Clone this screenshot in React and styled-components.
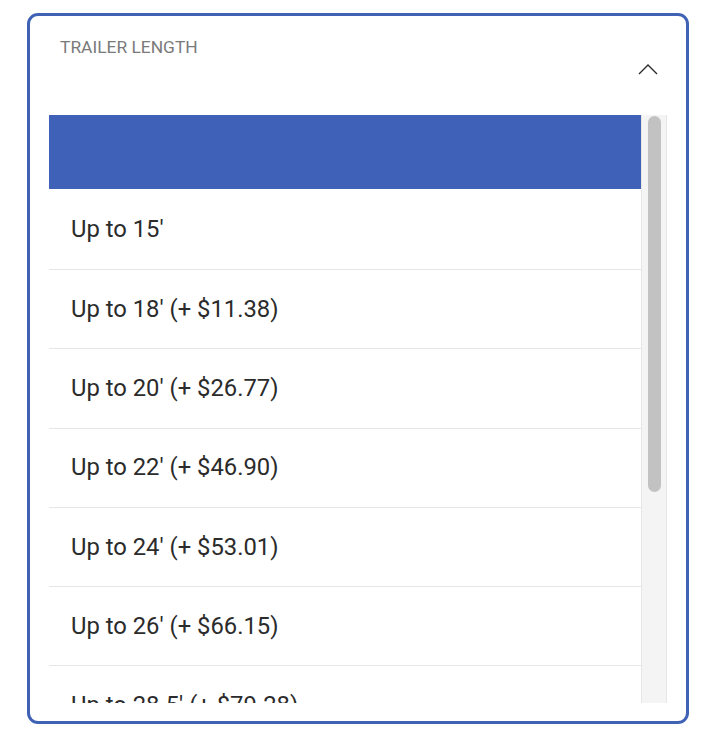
import styled, { createGlobalStyle } from "styled-components";

const GlobalStyle = createGlobalStyle`
  html, body {
    margin: 0;
    padding: 0;
    background: #ffffff;
    font-family: Roboto, "Liberation Sans", sans-serif;
  }
`;

const Page = styled.div`
  padding: 13px 0 0 27px;
`;

const Card = styled.div`
  width: 662px;
  height: 711px;
  box-sizing: border-box;
  border: 3px solid #3f62b5;
  border-radius: 11px;
  background: #ffffff;
  display: flex;
  flex-direction: column;
  padding: 0 19px 18px 19px;
`;

const Header = styled.div`
  height: 99px;
  flex-shrink: 0;
  display: flex;
  justify-content: space-between;
  align-items: flex-start;
  padding: 21px 9px 0 11px;
  box-sizing: border-box;
`;

const Label = styled.div`
  font-size: 17.4px;
  line-height: 20px;
  color: #7a7a7a;
`;

const Chevron = styled.svg`
  margin-top: 26px;
  width: 20px;
  height: 12px;
`;

const Body = styled.div`
  flex: 1;
  min-height: 0;
  display: flex;
`;

const Viewport = styled.div`
  flex: 1;
  overflow: hidden;
`;

const ScrollTrack = styled.div`
  width: 26px;
  flex-shrink: 0;
  box-sizing: border-box;
  background: #f4f4f4;
  border-left: 1px solid #e6e6e6;
  border-right: 1px solid #e6e6e6;
  padding: 1px 5px 0 6px;
`;

const Thumb = styled.div`
  height: 376px;
  border-radius: 8px;
  background: #c2c2c2;
`;

const Selected = styled.div`
  height: 74px;
  background: #3f62b8;
`;

const Option = styled.div`
  height: ${(p) => (p.$first ? "81px" : "79.3px")};
  display: flex;
  align-items: center;
  padding: ${(p) => (p.$first ? "0 0 0 22px" : "0 0 1px 22px")};
  border-bottom: 1px solid #e6e6e6;
  font-size: 23.8px;
  color: #2b2b2b;
  box-sizing: border-box;
`;

const options = [
  "Up to 15'",
  "Up to 18' (+ $11.38)",
  "Up to 20' (+ $26.77)",
  "Up to 22' (+ $46.90)",
  "Up to 24' (+ $53.01)",
  "Up to 26' (+ $66.15)",
  "Up to 28.5' (+ $79.28)",
  "Up to 30' (+ $92.44)",
];

const App = () => {
  return (
    <Page>
      <GlobalStyle />
      <Card>
        <Header>
          <Label>TRAILER LENGTH</Label>
          <Chevron viewBox="0 0 20 12">
            <polyline
              points="1,11 10,2 19,11"
              fill="none"
              stroke="#2a2a2a"
              strokeWidth="1.4"
            />
          </Chevron>
        </Header>
        <Body>
          <Viewport>
            <Selected />
            {options.map((o, i) => (
              <Option key={o} $first={i === 0}>
                {o}
              </Option>
            ))}
          </Viewport>
          <ScrollTrack>
            <Thumb />
          </ScrollTrack>
        </Body>
      </Card>
    </Page>
  );
};

export default App;
